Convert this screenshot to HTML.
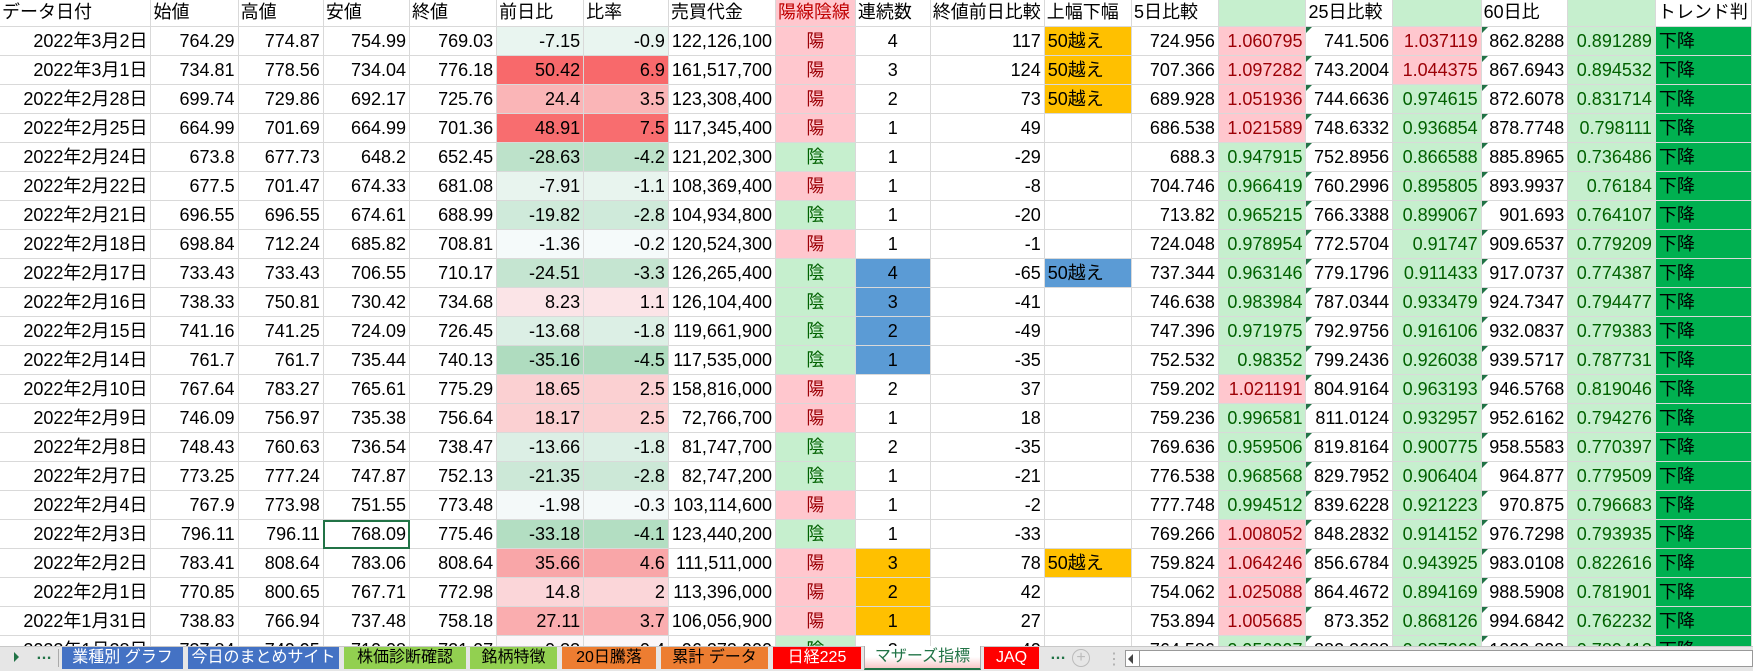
<!DOCTYPE html>
<html><head><meta charset="utf-8"><style>
*{margin:0;padding:0;box-sizing:border-box}
body{width:1753px;height:671px;overflow:hidden;background:#fff;font-family:"Liberation Sans","Noto Sans CJK JP",sans-serif;font-size:18px;color:#000;position:relative}
table{border-collapse:collapse;table-layout:fixed;position:absolute;left:-1px;top:-1px}
td{border:1px solid #d9d9d9;height:29px;padding:0 3px 1px 3px;vertical-align:bottom;white-space:nowrap;overflow:hidden;line-height:25px;position:relative}
tr.h td{height:26px;text-align:left;padding-left:2px}
.r{text-align:right}.c{text-align:center}
.y{background:#ffc7ce;color:#9c0006;text-align:center}
.g{background:#c6efce;color:#006100;text-align:center}
.p{background:#ffc7ce;color:#9c0006;text-align:right}
.q{background:#c6efce;color:#006100;text-align:right}
.o{background:#ffc000}
.b{background:#5b9bd5}
.t{background:#00b050}
.m::before{content:"";position:absolute;left:0;top:0;border-top:6px solid #217346;border-right:6px solid transparent}
.sel{outline:2px solid #217346;outline-offset:-2px}
#tabs{position:absolute;left:0;top:646px;width:1753px;height:25px;background:#e6e6e6;border-top:1px solid #c8c8c8;font-size:16px}
.tab{position:absolute;top:0;height:22px;line-height:21px;text-align:center;color:#fff;white-space:nowrap;overflow:hidden}
</style></head><body>
<table>
<colgroup><col style="width:153px"><col style="width:89px"><col style="width:87px"><col style="width:88px"><col style="width:89px"><col style="width:89px"><col style="width:88px"><col style="width:107px"><col style="width:80px"><col style="width:76px"><col style="width:111px"><col style="width:88px"><col style="width:88px"><col style="width:88px"><col style="width:87px"><col style="width:89px"><col style="width:87px"><col style="width:88px"><col style="width:90px"></colgroup>
<tr class="h"><td>データ日付</td><td>始値</td><td>高値</td><td>安値</td><td>終値</td><td>前日比</td><td>比率</td><td>売買代金</td><td style="background:#ffc7ce;color:#c00000">陽線陰線</td><td>連続数</td><td>終値前日比較</td><td>上幅下幅</td><td>5日比較</td><td style="background:#c6efce"></td><td>25日比較</td><td style="background:#c6efce"></td><td>60日比</td><td style="background:#c6efce"></td><td>トレンド判</td></tr>
<tr><td class="r">2022年3月2日</td><td class="r">764.29</td><td class="r">774.87</td><td class="r">754.99</td><td class="r">769.03</td><td class="r" style="background:#e9f5f0">-7.15</td><td class="r" style="background:#e9f5f0">-0.9</td><td class="r">122,126,100</td><td class="y">陽</td><td class="c">4</td><td class="r">117</td><td class="o">50越え</td><td class="r">724.956</td><td class="p">1.060795</td><td class="r m">741.506</td><td class="p">1.037119</td><td class="r m">862.8288</td><td class="q">0.891289</td><td class="t">下降</td></tr>
<tr><td class="r">2022年3月1日</td><td class="r">734.81</td><td class="r">778.56</td><td class="r">734.04</td><td class="r">776.18</td><td class="r" style="background:#f8696b">50.42</td><td class="r" style="background:#f8696b">6.9</td><td class="r">161,517,700</td><td class="y">陽</td><td class="c">3</td><td class="r">124</td><td class="o">50越え</td><td class="r">707.366</td><td class="p">1.097282</td><td class="r m">743.2004</td><td class="p">1.044375</td><td class="r m">867.6943</td><td class="q">0.894532</td><td class="t">下降</td></tr>
<tr><td class="r">2022年2月28日</td><td class="r">699.74</td><td class="r">729.86</td><td class="r">692.17</td><td class="r">725.76</td><td class="r" style="background:#fab5b7">24.4</td><td class="r" style="background:#fab5b7">3.5</td><td class="r">123,308,400</td><td class="y">陽</td><td class="c">2</td><td class="r">73</td><td class="o">50越え</td><td class="r">689.928</td><td class="p">1.051936</td><td class="r m">744.6636</td><td class="q">0.974615</td><td class="r m">872.6078</td><td class="q">0.831714</td><td class="t">下降</td></tr>
<tr><td class="r">2022年2月25日</td><td class="r">664.99</td><td class="r">701.69</td><td class="r">664.99</td><td class="r">701.36</td><td class="r" style="background:#f86d6f">48.91</td><td class="r" style="background:#f86d6f">7.5</td><td class="r">117,345,400</td><td class="y">陽</td><td class="c">1</td><td class="r">49</td><td></td><td class="r">686.538</td><td class="p">1.021589</td><td class="r m">748.6332</td><td class="q">0.936854</td><td class="r m">878.7748</td><td class="q">0.798111</td><td class="t">下降</td></tr>
<tr><td class="r">2022年2月24日</td><td class="r">673.8</td><td class="r">677.73</td><td class="r">648.2</td><td class="r">652.45</td><td class="r" style="background:#bde2ca">-28.63</td><td class="r" style="background:#bde2ca">-4.2</td><td class="r">121,202,300</td><td class="g">陰</td><td class="c">1</td><td class="r">-29</td><td></td><td class="r">688.3</td><td class="q">0.947915</td><td class="r m">752.8956</td><td class="q">0.866588</td><td class="r m">885.8965</td><td class="q">0.736486</td><td class="t">下降</td></tr>
<tr><td class="r">2022年2月22日</td><td class="r">677.5</td><td class="r">701.47</td><td class="r">674.33</td><td class="r">681.08</td><td class="r" style="background:#e8f4ee">-7.91</td><td class="r" style="background:#e8f4ee">-1.1</td><td class="r">108,369,400</td><td class="y">陽</td><td class="c">1</td><td class="r">-8</td><td></td><td class="r">704.746</td><td class="q">0.966419</td><td class="r m">760.2996</td><td class="q">0.895805</td><td class="r m">893.9937</td><td class="q">0.76184</td><td class="t">下降</td></tr>
<tr><td class="r">2022年2月21日</td><td class="r">696.55</td><td class="r">696.55</td><td class="r">674.61</td><td class="r">688.99</td><td class="r" style="background:#cfeada">-19.82</td><td class="r" style="background:#cfeada">-2.8</td><td class="r">104,934,800</td><td class="g">陰</td><td class="c">1</td><td class="r">-20</td><td></td><td class="r">713.82</td><td class="q">0.965215</td><td class="r m">766.3388</td><td class="q">0.899067</td><td class="r m">901.693</td><td class="q">0.764107</td><td class="t">下降</td></tr>
<tr><td class="r">2022年2月18日</td><td class="r">698.84</td><td class="r">712.24</td><td class="r">685.82</td><td class="r">708.81</td><td class="r" style="background:#f5fafa">-1.36</td><td class="r" style="background:#f5fafa">-0.2</td><td class="r">120,524,300</td><td class="y">陽</td><td class="c">1</td><td class="r">-1</td><td></td><td class="r">724.048</td><td class="q">0.978954</td><td class="r m">772.5704</td><td class="q">0.91747</td><td class="r m">909.6537</td><td class="q">0.779209</td><td class="t">下降</td></tr>
<tr><td class="r">2022年2月17日</td><td class="r">733.43</td><td class="r">733.43</td><td class="r">706.55</td><td class="r">710.17</td><td class="r" style="background:#c5e5d1">-24.51</td><td class="r" style="background:#c5e5d1">-3.3</td><td class="r">126,265,400</td><td class="g">陰</td><td class="c b">4</td><td class="r">-65</td><td class="b">50越え</td><td class="r">737.344</td><td class="q">0.963146</td><td class="r m">779.1796</td><td class="q">0.911433</td><td class="r m">917.0737</td><td class="q">0.774387</td><td class="t">下降</td></tr>
<tr><td class="r">2022年2月16日</td><td class="r">738.33</td><td class="r">750.81</td><td class="r">730.42</td><td class="r">734.68</td><td class="r" style="background:#fbe4e7">8.23</td><td class="r" style="background:#fbe4e7">1.1</td><td class="r">126,104,400</td><td class="g">陰</td><td class="c b">3</td><td class="r">-41</td><td></td><td class="r">746.638</td><td class="q">0.983984</td><td class="r m">787.0344</td><td class="q">0.933479</td><td class="r m">924.7347</td><td class="q">0.794477</td><td class="t">下降</td></tr>
<tr><td class="r">2022年2月15日</td><td class="r">741.16</td><td class="r">741.25</td><td class="r">724.09</td><td class="r">726.45</td><td class="r" style="background:#dcefe5">-13.68</td><td class="r" style="background:#dcefe5">-1.8</td><td class="r">119,661,900</td><td class="g">陰</td><td class="c b">2</td><td class="r">-49</td><td></td><td class="r">747.396</td><td class="q">0.971975</td><td class="r m">792.9756</td><td class="q">0.916106</td><td class="r m">932.0837</td><td class="q">0.779383</td><td class="t">下降</td></tr>
<tr><td class="r">2022年2月14日</td><td class="r">761.7</td><td class="r">761.7</td><td class="r">735.44</td><td class="r">740.13</td><td class="r" style="background:#afdcbf">-35.16</td><td class="r" style="background:#afdcbf">-4.5</td><td class="r">117,535,000</td><td class="g">陰</td><td class="c b">1</td><td class="r">-35</td><td></td><td class="r">752.532</td><td class="q">0.98352</td><td class="r m">799.2436</td><td class="q">0.926038</td><td class="r m">939.5717</td><td class="q">0.787731</td><td class="t">下降</td></tr>
<tr><td class="r">2022年2月10日</td><td class="r">767.64</td><td class="r">783.27</td><td class="r">765.61</td><td class="r">775.29</td><td class="r" style="background:#fbd0d2">18.65</td><td class="r" style="background:#fbd0d2">2.5</td><td class="r">158,816,000</td><td class="y">陽</td><td class="c">2</td><td class="r">37</td><td></td><td class="r">759.202</td><td class="p">1.021191</td><td class="r m">804.9164</td><td class="q">0.963193</td><td class="r m">946.5768</td><td class="q">0.819046</td><td class="t">下降</td></tr>
<tr><td class="r">2022年2月9日</td><td class="r">746.09</td><td class="r">756.97</td><td class="r">735.38</td><td class="r">756.64</td><td class="r" style="background:#fbd0d2">18.17</td><td class="r" style="background:#fbd0d2">2.5</td><td class="r">72,766,700</td><td class="y">陽</td><td class="c">1</td><td class="r">18</td><td></td><td class="r">759.236</td><td class="q">0.996581</td><td class="r m">811.0124</td><td class="q">0.932957</td><td class="r m">952.6162</td><td class="q">0.794276</td><td class="t">下降</td></tr>
<tr><td class="r">2022年2月8日</td><td class="r">748.43</td><td class="r">760.63</td><td class="r">736.54</td><td class="r">738.47</td><td class="r" style="background:#dcefe5">-13.66</td><td class="r" style="background:#dcefe5">-1.8</td><td class="r">81,747,700</td><td class="g">陰</td><td class="c">2</td><td class="r">-35</td><td></td><td class="r">769.636</td><td class="q">0.959506</td><td class="r m">819.8164</td><td class="q">0.900775</td><td class="r m">958.5583</td><td class="q">0.770397</td><td class="t">下降</td></tr>
<tr><td class="r">2022年2月7日</td><td class="r">773.25</td><td class="r">777.24</td><td class="r">747.87</td><td class="r">752.13</td><td class="r" style="background:#cce8d7">-21.35</td><td class="r" style="background:#cce8d7">-2.8</td><td class="r">82,747,200</td><td class="g">陰</td><td class="c">1</td><td class="r">-21</td><td></td><td class="r">776.538</td><td class="q">0.968568</td><td class="r m">829.7952</td><td class="q">0.906404</td><td class="r m">964.877</td><td class="q">0.779509</td><td class="t">下降</td></tr>
<tr><td class="r">2022年2月4日</td><td class="r">767.9</td><td class="r">773.98</td><td class="r">751.55</td><td class="r">773.48</td><td class="r" style="background:#f4f9f9">-1.98</td><td class="r" style="background:#f4f9f9">-0.3</td><td class="r">103,114,600</td><td class="y">陽</td><td class="c">1</td><td class="r">-2</td><td></td><td class="r">777.748</td><td class="q">0.994512</td><td class="r m">839.6228</td><td class="q">0.921223</td><td class="r m">970.875</td><td class="q">0.796683</td><td class="t">下降</td></tr>
<tr><td class="r">2022年2月3日</td><td class="r">796.11</td><td class="r">796.11</td><td class="r sel">768.09</td><td class="r">775.46</td><td class="r" style="background:#b3dec2">-33.18</td><td class="r" style="background:#b3dec2">-4.1</td><td class="r">123,440,200</td><td class="g">陰</td><td class="c">1</td><td class="r">-33</td><td></td><td class="r">769.266</td><td class="p">1.008052</td><td class="r m">848.2832</td><td class="q">0.914152</td><td class="r m">976.7298</td><td class="q">0.793935</td><td class="t">下降</td></tr>
<tr><td class="r">2022年2月2日</td><td class="r">783.41</td><td class="r">808.64</td><td class="r">783.06</td><td class="r">808.64</td><td class="r" style="background:#f9a6a8">35.66</td><td class="r" style="background:#f9a6a8">4.6</td><td class="r">111,511,000</td><td class="y">陽</td><td class="c o">3</td><td class="r">78</td><td class="o">50越え</td><td class="r">759.824</td><td class="p">1.064246</td><td class="r m">856.6784</td><td class="q">0.943925</td><td class="r m">983.0108</td><td class="q">0.822616</td><td class="t">下降</td></tr>
<tr><td class="r">2022年2月1日</td><td class="r">770.85</td><td class="r">800.65</td><td class="r">767.71</td><td class="r">772.98</td><td class="r" style="background:#fbd6d9">14.8</td><td class="r" style="background:#fbd6d9">2</td><td class="r">113,396,000</td><td class="y">陽</td><td class="c o">2</td><td class="r">42</td><td></td><td class="r">754.062</td><td class="p">1.025088</td><td class="r m">864.4672</td><td class="q">0.894169</td><td class="r m">988.5908</td><td class="q">0.781901</td><td class="t">下降</td></tr>
<tr><td class="r">2022年1月31日</td><td class="r">738.83</td><td class="r">766.94</td><td class="r">737.48</td><td class="r">758.18</td><td class="r" style="background:#faadaf">27.11</td><td class="r" style="background:#faadaf">3.7</td><td class="r">106,056,900</td><td class="y">陽</td><td class="c o">1</td><td class="r">27</td><td></td><td class="r">753.894</td><td class="p">1.005685</td><td class="r m">873.352</td><td class="q">0.868126</td><td class="r m">994.6842</td><td class="q">0.762232</td><td class="t">下降</td></tr>
<tr><td class="r">2022年1月28日</td><td class="r">737.84</td><td class="r">740.95</td><td class="r">710.08</td><td class="r">721.07</td><td class="r" style="background:#fbf7f9">-0.33</td><td class="r" style="background:#fbf7f9">-0.4</td><td class="r">96,272,900</td><td class="g">陰</td><td class="c">2</td><td class="r">-40</td><td></td><td class="r">764.586</td><td class="q">0.956097</td><td class="r m">882.3688</td><td class="q">0.887260</td><td class="r m">1000.808</td><td class="q">0.789413</td><td class="t">下降</td></tr>
</table>
<div id="tabs">
<div style="position:absolute;left:14px;top:5px;width:0;height:0;border-left:5px solid #217346;border-top:5px solid transparent;border-bottom:5px solid transparent"></div>
<div style="position:absolute;left:36px;top:-1px;color:#217346;font-weight:bold">…</div>
<div style="position:absolute;left:58px;top:2px;width:1px;height:18px;background:#aaa"></div>
<div class="tab" style="left:62px;width:121px;background:#4472c4">業種別 グラフ</div>
<div class="tab" style="left:188px;width:151px;background:#4472c4">今日のまとめサイト</div>
<div class="tab" style="left:344px;width:122px;background:#92d050;color:#000">株価診断確認</div>
<div class="tab" style="left:470px;width:87px;background:#92d050;color:#000">銘柄特徴</div>
<div class="tab" style="left:562px;width:94px;background:#ed7d31;color:#000">20日騰落</div>
<div class="tab" style="left:661px;width:107px;background:#ed7d31;color:#000">累計 データ</div>
<div class="tab" style="left:773px;width:88px;background:#ff0000">日経225</div>
<div class="tab" style="left:864px;width:117px;top:-1px;height:24px;background:linear-gradient(#fff 50%,#f8c8c8);color:#217346;border:1px solid #aaa;border-top:none;border-bottom:2px solid #217346">マザーズ指標</div>
<div class="tab" style="left:984px;width:55px;background:#ff0000">JAQ</div>
<div style="position:absolute;left:1050px;top:-1px;color:#217346;font-weight:bold">…</div>
<div style="position:absolute;left:1072px;top:2px;width:18px;height:18px;border:1px solid #bbb;border-radius:50%;color:#bbb;text-align:center;line-height:15px;font-size:16px">+</div>
<div style="position:absolute;left:1106px;top:2px;color:#aaa;font-size:16px">⋮</div>
<div style="position:absolute;left:1125px;top:3px;width:628px;height:17px;background:#fff;border:1px solid #999"></div>
<div style="position:absolute;left:1128px;top:7px;width:0;height:0;border-right:5px solid #444;border-top:5px solid transparent;border-bottom:5px solid transparent"></div>
<div style="position:absolute;left:1139px;top:4px;width:1px;height:15px;background:#999"></div>
</div>
</body></html>
